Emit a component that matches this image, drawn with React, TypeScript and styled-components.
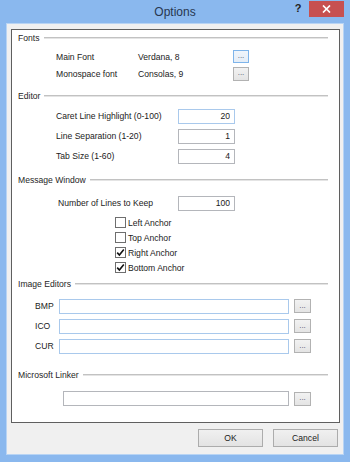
import React from "react";
import styled, { createGlobalStyle } from "styled-components";

const Global = createGlobalStyle`
  html, body { margin: 0; padding: 0; background: #ffffff; }
  body { font-family: "Liberation Sans", Arial, sans-serif; }
  * { box-sizing: border-box; }
`;

const Window = styled.div`
  width: 350px;
  height: 462px;
  background: #8ab8ee;
  display: flex;
  flex-direction: column;
  padding: 0 6px 7px 6px;
`;

const TitleBar = styled.div`
  height: 23px;
  display: grid;
  grid-template-columns: 1fr auto 1fr;
  align-items: start;
`;

const Title = styled.div`
  grid-column: 2;
  font-family: "Liberation Sans", Arial, sans-serif;
  font-size: 12px;
  line-height: 24px;
  color: #283650;
`;

const Controls = styled.div`
  grid-column: 3;
  justify-self: end;
  display: flex;
  align-items: start;
`;

const HelpButton = styled.div`
  width: 22px;
  height: 17px;
  font-family: "Liberation Sans", Arial, sans-serif;
  font-weight: bold;
  font-size: 11px;
  line-height: 17px;
  text-align: center;
  color: #222;
`;

const CloseButton = styled.div`
  width: 35px;
  height: 16px;
  margin-top: 1px;
  background: #c75050;
  display: flex;
  align-items: center;
  justify-content: center;
`;

const Client = styled.div`
  flex: 1;
  border: 1px solid #b8d4f4;
  background: #f0f0f0;
  padding: 5px 3px 7px 4px;
  display: flex;
  flex-direction: column;
`;

const Panel = styled.div`
  height: 394px;
  border: 1px solid #5f5f5f;
  background: #ffffff;
  font-size: 8.6px;
  color: #1b1b1b;
`;

const Section = styled.div<{ $top: number }>`
  margin-top: ${(p) => p.$top}px;
`;

const Heading = styled.div`
  height: 16px;
  display: grid;
  grid-template-columns: auto 1fr;
  align-items: center;
  column-gap: 4px;
  padding: 0 11px 0 6px;
  color: #262626;
`;

const Rule = styled.div`
  height: 2px;
  border-top: 1px solid #c2c2c2;
  border-bottom: 1px solid #e4e4e4;
`;

const FormGrid = styled.div<{ $cols: string; $row: number; $left: number; $top: number; $gap?: number }>`
  display: grid;
  grid-template-columns: ${(p) => p.$cols};
  grid-auto-rows: ${(p) => p.$row}px;
  align-items: center;
  column-gap: ${(p) => p.$gap ?? 0}px;
  padding-left: ${(p) => p.$left}px;
  margin-top: ${(p) => p.$top}px;
`;

const Label = styled.span`
  white-space: nowrap;
`;

const TextBox = styled.input<{ $accent?: boolean; $align?: string }>`
  height: 15px;
  width: 100%;
  border: 1px solid ${(p) => (p.$accent ? "#a9c9ec" : "#b4b6bb")};
  background: #ffffff;
  font-family: "Liberation Sans", Arial, sans-serif;
  font-size: 8.6px;
  color: #1b1b1b;
  text-align: ${(p) => p.$align ?? "left"};
  padding: 0 4px;
  outline: none;
  margin: 0;
`;

const Browse = styled.button<{ $focus?: boolean; $h?: number }>`
  width: ${(p) => (p.$h ? 16 : 17)}px;
  height: ${(p) => p.$h ?? 14}px;
  padding: 0 0 1px 0;
  margin: 0;
  border: 1px solid ${(p) => (p.$focus ? "#7eb4ea" : "#b2b2b2")};
  background: ${(p) =>
    p.$focus ? "linear-gradient(#f0f5fb, #e4edf7)" : "linear-gradient(#f2f2f2, #e4e4e4)"};
  font-family: "Liberation Sans", Arial, sans-serif;
  font-size: 8px;
  line-height: 8px;
  color: #4a4a6a;
  display: flex;
  align-items: center;
  justify-content: center;
`;

const CheckList = styled.div`
  display: grid;
  grid-auto-rows: 15px;
  padding-left: 103px;
  margin-top: -1px;
`;

const CheckRow = styled.label`
  display: flex;
  align-items: center;
  gap: 2px;
  white-space: nowrap;
`;

const Box = styled.span`
  width: 11px;
  height: 11px;
  border: 1px solid #6e6e6e;
  background: #ffffff;
  display: flex;
  align-items: center;
  justify-content: center;
`;

const ButtonBar = styled.div`
  margin-top: 6px;
  display: flex;
  justify-content: flex-end;
  gap: 10px;
  padding-right: 2px;
`;

const DialogButton = styled.button`
  width: 65px;
  height: 18px;
  margin: 0;
  padding: 0;
  border: 1px solid #acacac;
  background: linear-gradient(#f0f0f0, #e3e3e3);
  font-family: "Liberation Sans", Arial, sans-serif;
  font-size: 8.6px;
  color: #1b1b1b;
`;

const Check = ({ checked, label }: { checked: boolean; label: string }) => (
  <CheckRow>
    <Box>
      {checked && (
        <svg width="9" height="9" viewBox="0 0 9 9">
          <path d="M1.2 4.6 L3.4 7 L7.8 1.6" fill="none" stroke="#111" strokeWidth="1.6" />
        </svg>
      )}
    </Box>
    <span>{label}</span>
  </CheckRow>
);

const Head = ({ text }: { text: string }) => (
  <Heading>
    <span>{text}</span>
    <Rule />
  </Heading>
);

export default function App() {
  return (
    <>
      <Global />
      <Window>
        <TitleBar>
          <Title>Options</Title>
          <Controls>
            <HelpButton>?</HelpButton>
            <CloseButton>
              <svg width="9" height="8" viewBox="0 0 9 8">
                <path d="M1 0.5 L8 7.5 M8 0.5 L1 7.5" stroke="#fff" strokeWidth="1.7" />
              </svg>
            </CloseButton>
          </Controls>
        </TitleBar>
        <Client>
          <Panel>
            <Section $top={0}>
              <Head text="Fonts" />
              <FormGrid $cols="82px 95px 16px" $row={17} $left={44} $top={2}>
                <Label>Main Font</Label>
                <Label>Verdana, 8</Label>
                <Browse $focus $h={13}>...</Browse>
                <Label>Monospace font</Label>
                <Label>Consolas, 9</Label>
                <Browse $h={14}>...</Browse>
              </FormGrid>
            </Section>
            <Section $top={6}>
              <Head text="Editor" />
              <FormGrid $cols="122px 57px" $row={20} $left={44} $top={2}>
                <Label>Caret Line Highlight (0-100)</Label>
                <TextBox $accent $align="right" readOnly value="20" />
                <Label>Line Separation (1-20)</Label>
                <TextBox $align="right" readOnly value="1" />
                <Label>Tab Size (1-60)</Label>
                <TextBox $align="right" readOnly value="4" />
              </FormGrid>
            </Section>
            <Section $top={6}>
              <Head text="Message Window" />
              <FormGrid $cols="120px 57px" $row={26} $left={46} $top={2}>
                <Label>Number of Lines to Keep</Label>
                <TextBox $align="right" readOnly value="100" />
              </FormGrid>
              <CheckList>
                <Check checked={false} label="Left Anchor" />
                <Check checked={false} label="Top Anchor" />
                <Check checked label="Right Anchor" />
                <Check checked label="Bottom Anchor" />
              </CheckList>
            </Section>
            <Section $top={1}>
              <Head text="Image Editors" />
              <FormGrid $cols="19px 230px 17px" $row={20} $left={23} $top={4} $gap={5}>
                <Label>BMP</Label>
                <TextBox $accent readOnly value="" />
                <Browse>...</Browse>
                <Label>ICO</Label>
                <TextBox $accent readOnly value="" />
                <Browse>...</Browse>
                <Label>CUR</Label>
                <TextBox $accent readOnly value="" />
                <Browse>...</Browse>
              </FormGrid>
            </Section>
            <Section $top={11}>
              <Head text="Microsoft Linker" />
              <FormGrid $cols="226px 17px" $row={21} $left={51} $top={5} $gap={5}>
                <TextBox readOnly value="" />
                <Browse>...</Browse>
              </FormGrid>
            </Section>
          </Panel>
          <ButtonBar>
            <DialogButton>OK</DialogButton>
            <DialogButton>Cancel</DialogButton>
          </ButtonBar>
        </Client>
      </Window>
    </>
  );
}
